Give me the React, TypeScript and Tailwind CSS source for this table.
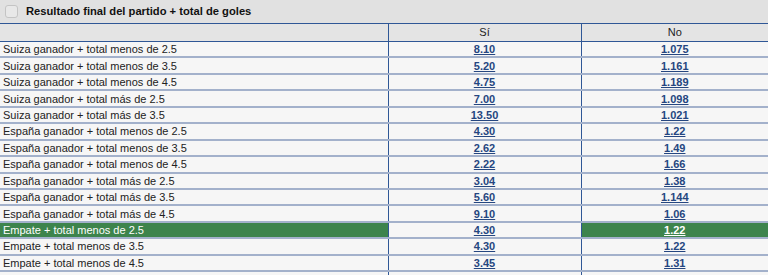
import React from "react";

const rows: [string, string, string, "none" | "no"][] = [
  ["Suiza ganador + total menos de 2.5", "8.10", "1.075", "none"],
  ["Suiza ganador + total menos de 3.5", "5.20", "1.161", "none"],
  ["Suiza ganador + total menos de 4.5", "4.75", "1.189", "none"],
  ["Suiza ganador + total más de 2.5", "7.00", "1.098", "none"],
  ["Suiza ganador + total más de 3.5", "13.50", "1.021", "none"],
  ["España ganador + total menos de 2.5", "4.30", "1.22", "none"],
  ["España ganador + total menos de 3.5", "2.62", "1.49", "none"],
  ["España ganador + total menos de 4.5", "2.22", "1.66", "none"],
  ["España ganador + total más de 2.5", "3.04", "1.38", "none"],
  ["España ganador + total más de 3.5", "5.60", "1.144", "none"],
  ["España ganador + total más de 4.5", "9.10", "1.06", "none"],
  ["Empate + total menos de 2.5", "4.30", "1.22", "no"],
  ["Empate + total menos de 3.5", "4.30", "1.22", "none"],
  ["Empate + total menos de 4.5", "3.45", "1.31", "none"],
  ["Empate + total más de 2.5", "11.00", "1.033", "none"],
];

export default function App() {
  return (
    <div
      className="w-[768px] h-[275px] overflow-hidden bg-[#f5f5f5] text-[#222]"
      style={{ fontFamily: '"Liberation Sans", Arial, sans-serif' }}
    >
      <div className="h-[24px] bg-[#e1e1e1] flex items-center pl-[5px] border-b border-[#2f5796]">
        <div className="w-[13px] h-[13px] rounded-[3px] border border-[#c4c4c4] bg-[#e8e8e8]" />
        <span className="ml-[8px] text-[11.2px] font-bold text-[#111]">
          Resultado final del partido + total de goles
        </span>
      </div>
      <table className="w-full border-collapse table-fixed text-[11px]">
        <colgroup>
          <col className="w-[388px]" />
          <col className="w-[193px]" />
          <col />
        </colgroup>
        <thead>
          <tr className="h-[16px] bg-[#e4e4e4] border-b border-[#2f5796]">
            <th className="border-r border-[#2f5796]" />
            <th className="font-normal text-center border-r border-[#2f5796]">Sí</th>
            <th className="font-normal text-center">No</th>
          </tr>
        </thead>
        <tbody>
          {rows.map(([label, si, no, sel], i) => {
            const green = sel === "no";
            return (
              <tr key={i} className="h-[16.45px] border-b-[2px] border-[#a3b1cb]">
                <td
                  className={
                    "pl-[3px] leading-[14px] border-r border-[#2f5796] whitespace-nowrap " +
                    (green ? "bg-[#3d844c] text-white" : "bg-[#f6f6f6]")
                  }
                >
                  {label}
                </td>
                <td className="text-center leading-[14px] border-r border-[#2f5796] bg-[#f6f6f6]">
                  <span className="font-bold underline text-[#254680]">{si}</span>
                </td>
                <td
                  className={
                    "text-center leading-[14px] " + (green ? "bg-[#3d844c]" : "bg-[#f6f6f6]")
                  }
                >
                  <span className={"font-bold underline " + (green ? "text-white" : "text-[#254680]")}>
                    {no}
                  </span>
                </td>
              </tr>
            );
          })}
        </tbody>
      </table>
    </div>
  );
}
